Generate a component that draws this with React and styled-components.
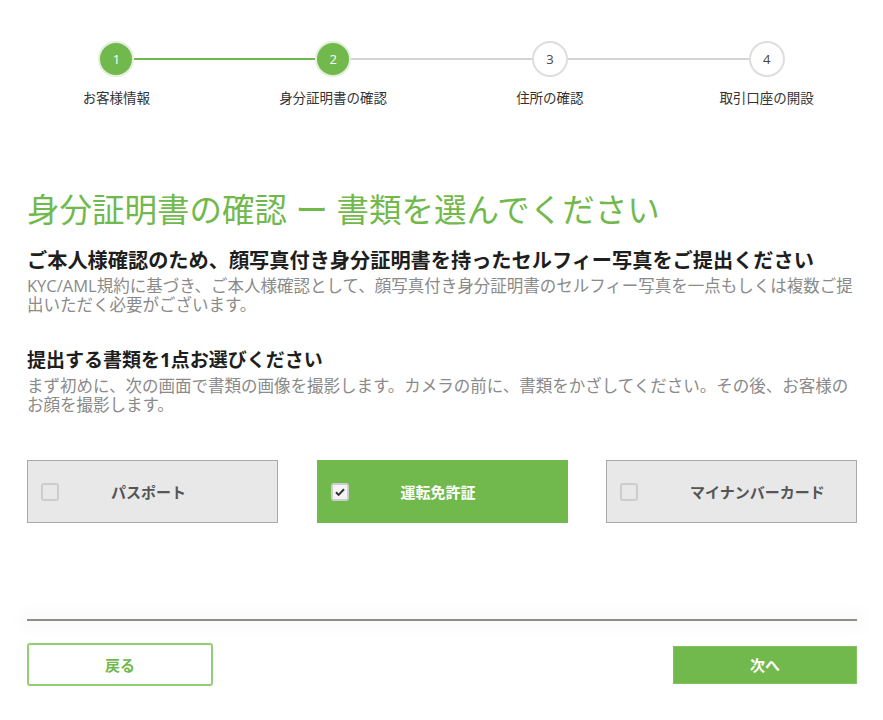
import React, { useState } from 'react';
import styled, { createGlobalStyle, css } from 'styled-components';

const green = '#71b94c';

const GlobalStyle = createGlobalStyle`
  html, body {
    margin: 0;
    padding: 0;
    background: #ffffff;
  }
  body {
    font-family: "Open Sans", "Noto Sans CJK JP", sans-serif;
    color: #222;
  }
`;

const Page = styled.div`
  width: 883px;
  min-height: 720px;
  box-sizing: border-box;
  padding-bottom: 32px;
`;

// ステップ表示
const Stepper = styled.ol`
  list-style: none;
  margin: 0;
  padding: 41px 8px 0;
  display: grid;
  grid-template-columns: repeat(4, 1fr);
`;

const Step = styled.li`
  position: relative;
  display: flex;
  flex-direction: column;
  align-items: center;

  &::after {
    content: '';
    display: ${props => (props.last ? 'none' : 'block')};
    position: absolute;
    top: 17px;
    left: calc(50% + 18px);
    width: calc(100% - 36px);
    height: 2px;
    background: ${props => (props.lineDone ? green : '#d4d4d4')};
  }
`;

const Circle = styled.div`
  width: 36px;
  height: 36px;
  box-sizing: border-box;
  border-radius: 50%;
  display: flex;
  align-items: center;
  justify-content: center;
  font-size: 13px;
  ${props =>
    props.done
      ? css`
          background: ${green};
          border: 2px solid #e3eedd;
          color: #fff;
        `
      : css`
          background: #fff;
          border: 2px solid #dedede;
          color: #444;
        `}
`;

const StepLabel = styled.div`
  margin-top: 12px;
  font-size: 13.5px;
  line-height: 18px;
  color: #333;
`;

const Main = styled.main`
  padding: 0 23px 0 27px;
`;

const Title = styled.h1`
  margin: 83px 0 0;
  font-size: 32.5px;
  line-height: 40px;
  font-weight: 400;
  color: ${green};
`;

const Heading = styled.h2`
  margin: ${props => props.top}px 0 4px;
  font-size: ${props => props.size}px;
  line-height: 24px;
  font-weight: 700;
  color: #1e1e1e;
`;

const Text = styled.p`
  margin: 0;
  font-size: 16.5px;
  line-height: 19px;
  color: #8a8a8a;
`;

const Options = styled.div`
  margin-top: 46px;
  width: 830px;
  display: grid;
  grid-template-columns: repeat(3, 251px);
  justify-content: space-between;
`;

const Option = styled.button`
  height: 63px;
  box-sizing: border-box;
  display: flex;
  align-items: center;
  padding: 0 0 0 13px;
  font-family: inherit;
  font-size: 15px;
  font-weight: 700;
  cursor: pointer;
  text-align: left;
  ${props =>
    props.selected
      ? css`
          background: ${green};
          border: 1px solid ${green};
          color: #fff;
        `
      : css`
          background: #e8e8e8;
          border: 1px solid #a9a9a9;
          color: #555;
        `}
`;

const Box = styled.span`
  width: 18px;
  height: 18px;
  box-sizing: border-box;
  border-radius: 3px;
  border: 2px solid #cdcdcd;
  background: ${props => (props.checked ? '#f4f4f4' : '#e8e8e8')};
  display: flex;
  align-items: center;
  justify-content: center;
  margin-right: 52px;
  flex-shrink: 0;
`;

const Divider = styled.hr`
  margin: 96px 0 0;
  width: 830px;
  height: 2px;
  border: 0;
  background: #8e8e86;
  box-shadow: 0 0 16px 8px rgba(0, 0, 0, 0.025);
`;

const Actions = styled.div`
  margin-top: 22px;
  width: 830px;
  display: flex;
  align-items: center;
  justify-content: space-between;
`;

const Button = styled.button`
  font-family: inherit;
  font-size: 15px;
  font-weight: 700;
  box-sizing: border-box;
  cursor: pointer;
  ${props =>
    props.primary
      ? css`
          width: 184px;
          height: 38px;
          background: ${green};
          border: 1px solid #7fc35c;
          color: #fff;
          border-radius: 0;
        `
      : css`
          width: 186px;
          height: 43px;
          background: #fff;
          border: 2px solid #92cf74;
          border-radius: 3px;
          color: ${green};
        `}
`;

const steps = ['お客様情報', '身分証明書の確認', '住所の確認', '取引口座の開設'];
const docs = ['パスポート', '運転免許証', 'マイナンバーカード'];

export default function App() {
  const current = 2;
  const [selected, setSelected] = useState(1);

  return (
    <Page>
      <GlobalStyle />
      <Stepper>
        {steps.map((label, i) => (
          <Step key={label} last={i === steps.length - 1} lineDone={i + 2 <= current}>
            <Circle done={i + 1 <= current}>{i + 1}</Circle>
            <StepLabel>{label}</StepLabel>
          </Step>
        ))}
      </Stepper>

      <Main>
        <Title>身分証明書の確認 ー 書類を選んでください</Title>
        <Heading top={18} size={20.2}>
          ご本人様確認のため、顔写真付き身分証明書を持ったセルフィー写真をご提出ください
        </Heading>
        <Text>
          KYC/AML規約に基づき、ご本人様確認として、顔写真付き身分証明書のセルフィー写真を一点もしくは複数ご提出いただく必要がございます。
        </Text>

        <Heading top={34} size={19}>提出する書類を1点お選びください</Heading>
        <Text>
          まず初めに、次の画面で書類の画像を撮影します。カメラの前に、書類をかざしてください。その後、お客様のお顔を撮影します。
        </Text>

        <Options>
          {docs.map((doc, i) => (
            <Option key={doc} selected={selected === i} onClick={() => setSelected(i)}>
              <Box checked={selected === i}>
                {selected === i && (
                  <svg width="12" height="12" viewBox="0 0 12 12">
                    <path d="M2 6.3l2.6 2.6L10 3.3" fill="none" stroke="#333" strokeWidth="2" />
                  </svg>
                )}
              </Box>
              {doc}
            </Option>
          ))}
        </Options>

        <Divider />

        <Actions>
          <Button>戻る</Button>
          <Button primary>次へ</Button>
        </Actions>
      </Main>
    </Page>
  );
}
